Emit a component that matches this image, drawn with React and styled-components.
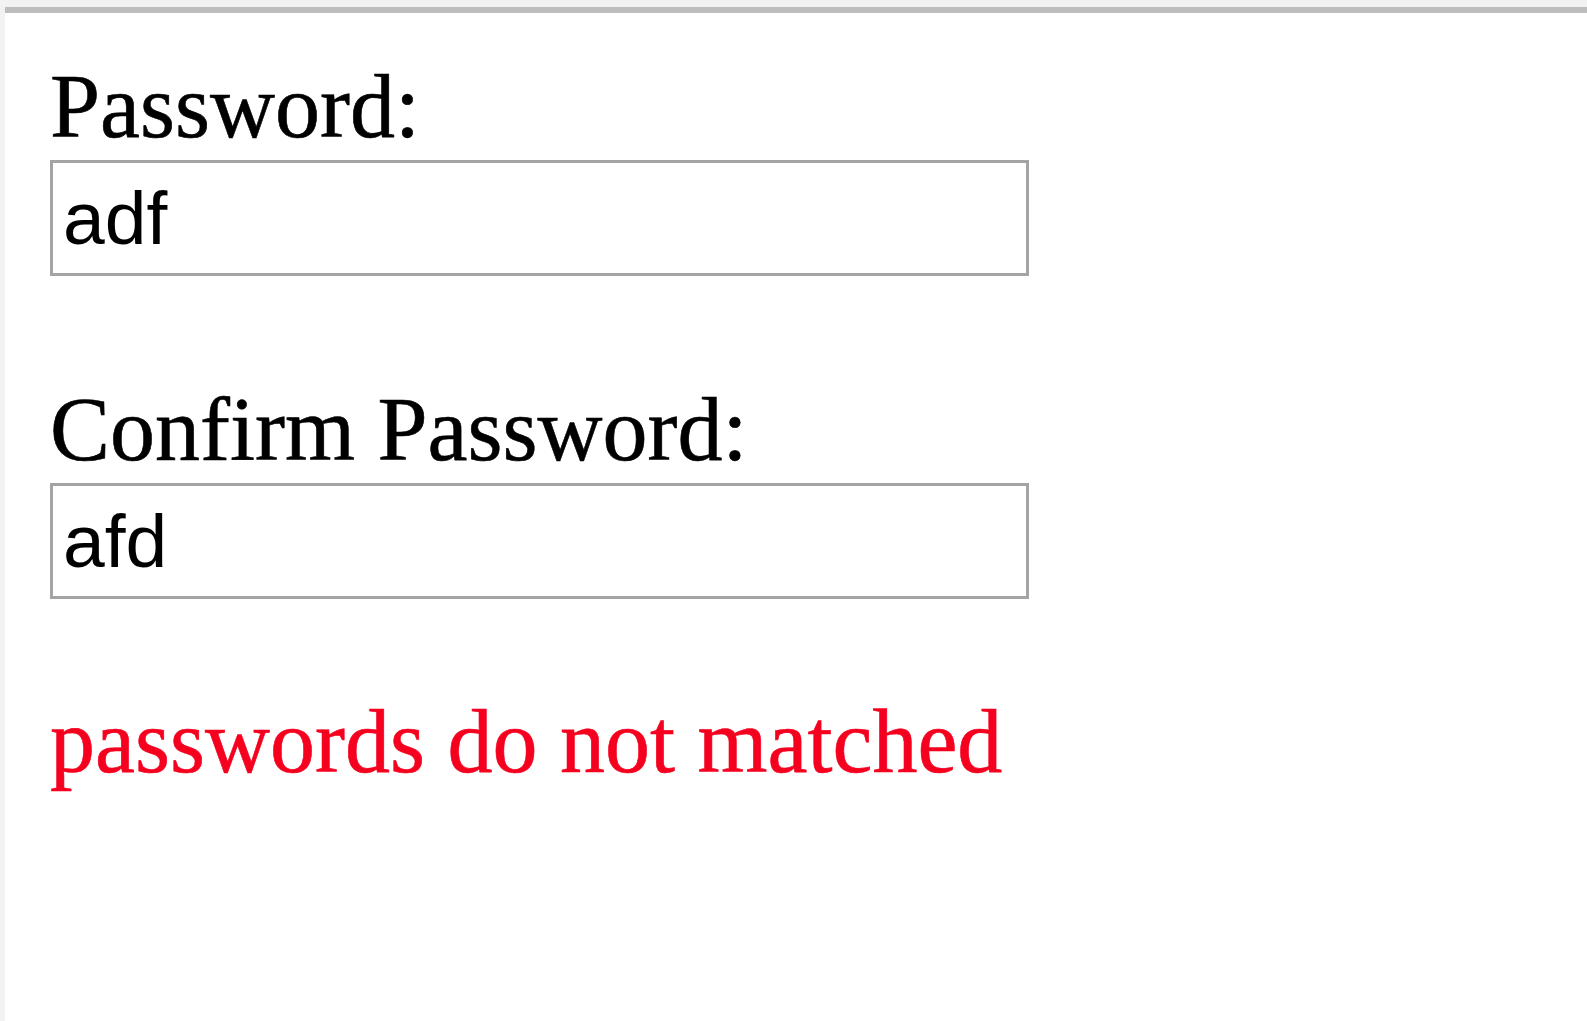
import React, { useState } from "react";
import styled, { createGlobalStyle } from "styled-components";

const GlobalStyle = createGlobalStyle`
  html, body {
    margin: 0;
    padding: 0;
    background: #f2f2f2;
  }
  #root {
    min-height: 100vh;
  }
`;

const Page = styled.div`
  min-height: 100vh;
  box-sizing: border-box;
  padding: 7px 0 0 5px;
  background: #f2f2f2;
  display: flex;
`;

const Panel = styled.main`
  flex: 1;
  background: #ffffff;
  border-top: 6px solid #bdbdbd;
  padding: 44px 0 0 45px;
  display: flex;
  flex-direction: column;
  align-items: flex-start;
`;

const Field = styled.div`
  display: flex;
  flex-direction: column;
  align-items: flex-start;
  margin-top: ${(p) => p.$gap || 0}px;
`;

const Label = styled.label`
  font-family: "Liberation Serif", "Times New Roman", serif;
  font-size: 90px;
  line-height: 100px;
  color: #000000;
  margin-bottom: 3px;
  -webkit-text-stroke: 0.6px #000000;
`;

const Input = styled.input`
  box-sizing: border-box;
  width: 979px;
  height: 116px;
  margin: 0;
  padding: 0 10px;
  border: 3px solid #a4a4a4;
  border-radius: 0;
  background: #ffffff;
  font-family: "Liberation Sans", Arial, sans-serif;
  font-size: 75px;
  color: #000000;
  outline: none;
`;

const ErrorText = styled.p`
  margin: 93px 0 0 0;
  font-family: "Liberation Serif", "Times New Roman", serif;
  font-size: 90px;
  line-height: 100px;
  color: #f5001e;
  -webkit-text-stroke: 0.6px #f5001e;
`;

export default function App() {
  const [password, setPassword] = useState("adf");
  const [confirm, setConfirm] = useState("afd");
  const mismatch = password !== confirm;

  return (
    <>
      <GlobalStyle />
      <Page>
        <Panel>
          <Field>
            <Label htmlFor="pw">Password:</Label>
            <Input
              id="pw"
              type="text"
              value={password}
              onChange={(e) => setPassword(e.target.value)}
            />
          </Field>
          <Field $gap={104}>
            <Label htmlFor="cpw">Confirm Password:</Label>
            <Input
              id="cpw"
              type="text"
              value={confirm}
              onChange={(e) => setConfirm(e.target.value)}
            />
          </Field>
          {mismatch && <ErrorText>passwords do not matched</ErrorText>}
        </Panel>
      </Page>
    </>
  );
}
